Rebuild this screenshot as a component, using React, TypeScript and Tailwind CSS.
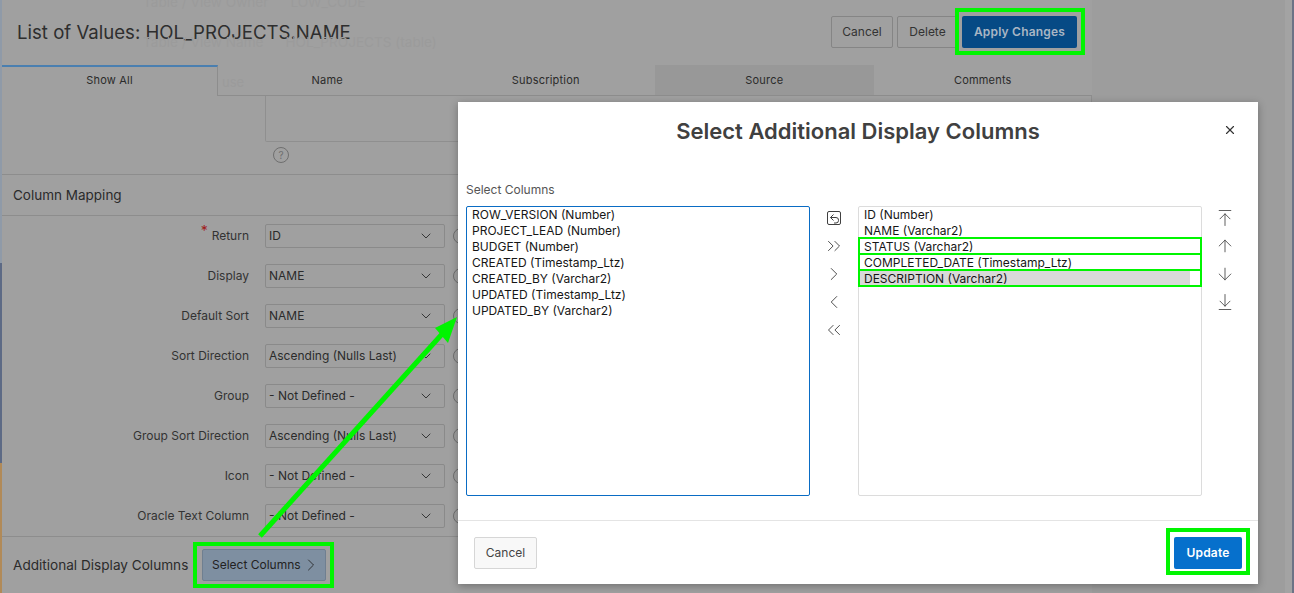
import {
  ArrowDown,
  ArrowDownToLine,
  ArrowUp,
  ArrowUpToLine,
  ChevronDown,
  ChevronLeft,
  ChevronRight,
  ChevronsLeft,
  ChevronsRight,
  X,
} from "lucide-react";

const tabs = ["Show All", "Name", "Subscription", "Source", "Comments"];

const mappingRows = [
  { label: "Return", value: "ID", required: true },
  { label: "Display", value: "NAME" },
  { label: "Default Sort", value: "NAME" },
  { label: "Sort Direction", value: "Ascending (Nulls Last)" },
  { label: "Group", value: "- Not Defined -" },
  { label: "Group Sort Direction", value: "Ascending (Nulls Last)" },
  { label: "Icon", value: "- Not Defined -" },
  { label: "Oracle Text Column", value: "- Not Defined -" },
];

const available = [
  "ROW_VERSION (Number)",
  "PROJECT_LEAD (Number)",
  "BUDGET (Number)",
  "CREATED (Timestamp_Ltz)",
  "CREATED_BY (Varchar2)",
  "UPDATED (Timestamp_Ltz)",
  "UPDATED_BY (Varchar2)",
];

const selected = [
  "ID (Number)",
  "NAME (Varchar2)",
  "STATUS (Varchar2)",
  "COMPLETED_DATE (Timestamp_Ltz)",
  "DESCRIPTION (Varchar2)",
];

const shuttleIcons = [ChevronsRight, ChevronRight, ChevronLeft, ChevronsLeft];
const orderIcons = [ArrowUpToLine, ArrowUp, ArrowDown, ArrowDownToLine];

function HelpIcon() {
  return (
    <span className="flex h-4 w-4 shrink-0 items-center justify-center rounded-full border border-[#6f6f6f] text-[10px] leading-none text-[#6f6f6f]">
      ?
    </span>
  );
}

function MappingRow({ label, value, required }: { label: string; value: string; required?: boolean }) {
  return (
    <div className="flex h-6 items-center">
      <div className="w-[247px] text-right text-[12px] text-[#333]">
        {required && <span className="relative -top-1 mr-1 text-[14px] leading-none text-[#a11a1a]">*</span>}
        {label}
      </div>
      <div className="ml-4 flex h-6 w-[180px] items-center justify-between rounded-[2px] border border-[#8a8a8a] bg-[#a0a0a0] pl-[3px] pr-[10px] text-[12px] text-[#2b2b2b]">
        <span>{value}</span>
        <ChevronDown size={16} strokeWidth={1.25} className="text-[#222]" />
      </div>
      <div className="ml-2">
        <HelpIcon />
      </div>
    </div>
  );
}

function ColumnList({ items, focused }: { items: string[]; focused?: boolean }) {
  return (
    <div
      className={`h-[290px] w-[344px] rounded-[2px] border text-[12px] leading-4 text-[#161616] ${
        focused ? "border-[#0a6cc4]" : "border-[#dcdcdc]"
      }`}
    >
      {items.map((item) => (
        <div
          key={item}
          className={`mr-[11px] h-4 pl-[5px] ${item.startsWith("DESCRIPTION") ? "bg-[#d9d9d9]" : ""}`}
        >
          {item}
        </div>
      ))}
    </div>
  );
}

function Highlight({ className }: { className: string }) {
  return <div className={`pointer-events-none absolute border-[#00f500] ${className}`} />;
}

export default function App() {
  return (
    <div className="relative flex h-[593px] w-[1294px] overflow-hidden bg-[#9d9d9d] font-['Inter','Liberation_Sans',sans-serif]">
      {/* desktop peeking out on the left */}
      <div className="flex w-[2px] shrink-0 flex-col">
        <div className="h-[263px] bg-[#8f9aa8]" />
        <div className="h-[200px] bg-[#5d6a85]" />
        <div className="flex-1 bg-[#b18a58]" />
      </div>

      {/* dimmed page behind the dialog */}
      <div className="flex w-[1090px] shrink-0 flex-col bg-[#a0a0a0]">
        <div className="flex h-[65px] items-start justify-between pl-[15px] pr-[15px] pt-4">
          <h1 className="mt-[4px] text-[18.6px] leading-6 text-[#2e2e2e]">List of Values: HOL_PROJECTS.NAME</h1>
          <div className="flex gap-1">
            <button className="h-8 w-[62px] rounded-[2px] border border-[#858585] text-[12px] text-[#333]">
              Cancel
            </button>
            <button className="h-8 w-[61px] rounded-[2px] border border-[#858585] text-[12px] text-[#333]">
              Delete
            </button>
            <button className="h-8 w-[115px] rounded-[2px] bg-[#064a85] text-[12px] font-semibold tracking-[0.2px] text-[#a9b6c4]">
              Apply Changes
            </button>
          </div>
        </div>

        <div className="flex h-[31px] border-b border-[#8d8d8d]">
          {tabs.map((tab, i) => (
            <div
              key={tab}
              className={`flex items-center justify-center text-[11px] tracking-[0.2px] text-[#2b2b2b] ${
                i === 0
                  ? "-mb-px w-[216px] border-r border-t-2 border-[#8d8d8d] border-t-[#4a7fb0] bg-[#a0a0a0] pb-[2px]"
                  : "flex-1"
              } ${i === 3 ? "bg-[#989898]" : ""}`}
            >
              {tab}
            </div>
          ))}
        </div>

        <div className="h-[79px] border-b border-[#8d8d8d] pl-[263px]">
          <div className="h-[46px] rounded-b-[2px] border border-t-0 border-[#8f8f8f]" />
          <div className="ml-[8px] mt-[5px]">
            <HelpIcon />
          </div>
        </div>

        <div className="flex h-[41px] items-center border-b border-[#8d8d8d] pl-[11px] text-[13.5px] text-[#2b2b2b]">
          Column Mapping
        </div>

        <div className="flex h-[321px] flex-col gap-4 border-b border-[#8d8d8d] pt-2">
          {mappingRows.map((row) => (
            <MappingRow key={row.label} {...row} />
          ))}
        </div>

        <div className="flex flex-1 items-center pl-[11px]">
          <span className="text-[13.6px] text-[#2b2b2b]">Additional Display Columns</span>
          <button className="ml-[14px] flex h-8 w-[124px] items-center justify-center rounded-[2px] border border-[#6f7f90] bg-[#7e8fa1] pl-1 text-[12px] text-[#222]">
            Select Columns
            <ChevronRight size={20} strokeWidth={1} />
          </button>
        </div>
      </div>

      <div className="flex-1" />
      <div className="w-[9px] shrink-0 border-r-2 border-[#6c7386] bg-[#a3a3a3]" />

      {/* content scrolled under the page header, barely showing through */}
      <div className="pointer-events-none absolute left-[143px] top-[-6px] flex gap-[22px] text-[13.6px] leading-4 text-[#9b9b9b]">
        <span>Table / View Owner</span>
        <span>LOW_CODE</span>
      </div>
      <div className="pointer-events-none absolute left-[143px] top-[34px] flex gap-[22px] text-[13.6px] leading-4 text-[#9b9b9b]">
        <span>Table / View Name</span>
        <span>HOL_PROJECTS (table)</span>
      </div>
      <div className="pointer-events-none absolute left-[222px] top-[74px] text-[13px] leading-4 text-[#9b9b9b]">use</div>

      {/* dialog */}
      <div className="absolute left-[458px] top-[102px] flex h-[482px] w-[800px] flex-col bg-white shadow-[0_2px_8px_rgba(0,0,0,0.3)]">
        <div className="relative flex h-[58px] items-center justify-center">
          <h2 className="text-[22px] font-semibold text-[#404040]">Select Additional Display Columns</h2>
          <X size={14} strokeWidth={2} className="absolute right-[21px] top-[21px] text-[#333]" />
        </div>
        <div className="flex flex-1 border-b border-[#e4e4e4] pl-2 pt-[21px]">
          <div>
            <div className="mb-2 mt-px h-4 text-[12px] leading-4 text-[#555]">Select Columns</div>
            <ColumnList items={available} focused />
          </div>
          <div className="mt-[23px] flex w-12 shrink-0 flex-col items-center text-[#404040]">
            <div className="flex h-7 items-center">
              <svg width="16" height="16" viewBox="0 0 16 16" fill="none" stroke="currentColor" strokeWidth="1">
                <rect x="1.5" y="1.5" width="13" height="13" rx="1.5" />
                <path d="M7.5 4.5 4.5 7.5 7.5 10.5M4.5 7.5H10a2.5 2.5 0 0 1 2.5 2.5v.5a2.5 2.5 0 0 1-2.5 2.5H8" />
              </svg>
            </div>
            {shuttleIcons.map((Icon, i) => (
              <div key={i} className="flex h-7 items-center">
                <Icon size={22} strokeWidth={1} />
              </div>
            ))}
          </div>
          <div className="mt-[25px]">
            <ColumnList items={selected} />
          </div>
          <div className="mt-[23px] flex w-[46px] shrink-0 flex-col items-center text-[#404040]">
            {orderIcons.map((Icon, i) => (
              <div key={i} className="flex h-7 items-center">
                <Icon size={20} strokeWidth={1} />
              </div>
            ))}
          </div>
        </div>
        <div className="flex h-[63px] items-center justify-between pl-4 pr-4">
          <button className="h-8 w-[63px] rounded-[2px] border border-[#d6d6d6] bg-[#f8f8f8] text-[12px] text-[#444]">
            Cancel
          </button>
          <button className="h-8 w-[68px] rounded-[2px] bg-[#0670cc] text-[12px] font-semibold tracking-[0.2px] text-white">
            Update
          </button>
        </div>
      </div>

      {/* green tutorial annotations */}
      <Highlight className="left-[955px] top-[8px] h-[47px] w-[130px] border-4" />
      <Highlight className="left-[193px] top-[542px] h-[46px] w-[141px] border-4" />
      <Highlight className="left-[1166px] top-[528px] h-[47px] w-[84px] border-4" />
      <Highlight className="left-[858px] top-[237px] h-[18px] w-[344px] border-2" />
      <Highlight className="left-[858px] top-[253px] h-[18px] w-[344px] border-2" />
      <Highlight className="left-[858px] top-[269px] h-[18px] w-[344px] border-2" />
      <svg className="pointer-events-none absolute left-0 top-0" width="1294" height="593" viewBox="0 0 1294 593">
        <path d="M260 536 443 333" stroke="#00f500" strokeWidth="5" fill="none" />
        <polygon points="457,317 435,328 448,343" fill="#00f500" />
      </svg>
    </div>
  );
}
